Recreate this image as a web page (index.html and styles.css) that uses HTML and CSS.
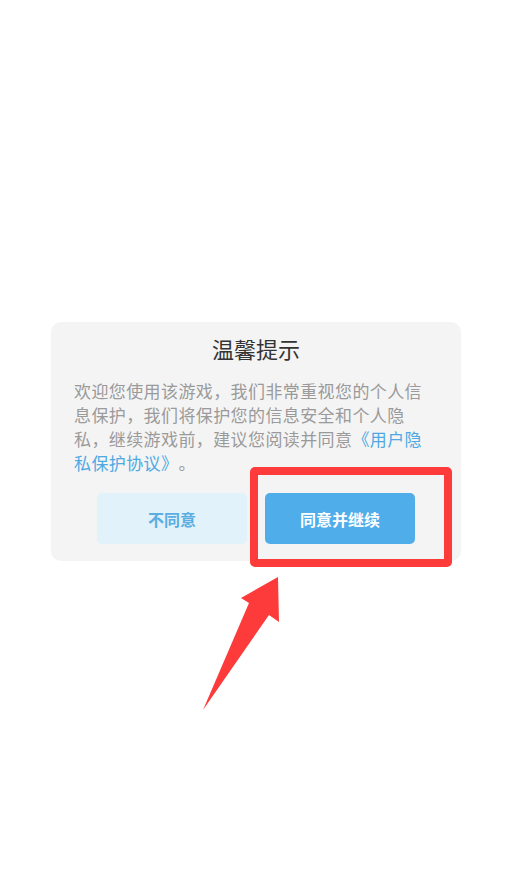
FILE: index.html
```html
<!DOCTYPE html>
<html lang="zh-CN">
<head>
<meta charset="utf-8">
<title>温馨提示</title>
<link rel="stylesheet" href="styles.css">
</head>
<body>
<div class="dialog">
  <div class="title">温馨提示</div>
  <p class="msg">欢迎您使用该游戏，我们非常重视您的个人信息保护，我们将保护您的信息安全和个人隐私，继续游戏前，建议您阅读并同意<span class="link">《用户隐私保护协议》</span>。</p>
  <div class="actions">
    <button class="btn btn-decline">不同意</button>
    <button class="btn btn-accept">同意并继续</button>
  </div>
</div>
<div class="highlight"></div>
<svg class="arrow" width="518" height="893" viewBox="0 0 518 893">
  <polygon points="278,577 279,622 269,615 203,710 249,603 241,598" fill="#fd3b3b"/>
</svg>
</body>
</html>
```
FILE: styles.css
```css
html, body {
  margin: 0;
  padding: 0;
  background: #ffffff;
}
body {
  width: 518px;
  height: 893px;
  position: relative;
  overflow: hidden;
  font-family: "Noto Sans CJK SC", "Noto Sans", sans-serif;
}
.dialog {
  box-sizing: border-box;
  margin: 322px 0 0 51px;
  width: 410px;
  height: 239px;
  background: #f4f4f4;
  border-radius: 10px;
  padding: 10px 23px 0 23px;
}
.title {
  text-align: center;
  font-size: 22px;
  line-height: 33px;
  color: #333333;
}
.msg {
  margin: 14px 0 0 0;
  width: 360px;
  font-size: 17px;
  letter-spacing: 0.4px;
  line-height: 24px;
  color: #9a9a9a;
  text-spacing-trim: space-all;
}
.link {
  color: #4ea9e3;
}
.actions {
  margin-top: 18px;
  display: flex;
  justify-content: center;
  gap: 18px;
}
.btn {
  width: 150px;
  height: 51px;
  border: none;
  border-radius: 5px;
  font-family: "Noto Sans CJK SC", "Noto Sans", sans-serif;
  font-size: 16px;
  font-weight: bold;
  padding: 0;
}
.btn-decline {
  background: #e1f2fa;
  color: #5aaee2;
}
.btn-accept {
  background: #4fadea;
  color: #ffffff;
}
.highlight {
  position: absolute;
  left: 250px;
  top: 467px;
  width: 202px;
  height: 100px;
  box-sizing: border-box;
  border: 8px solid #fd3b3b;
  border-radius: 5px;
}
.arrow {
  position: absolute;
  left: 0;
  top: 0;
}
```
